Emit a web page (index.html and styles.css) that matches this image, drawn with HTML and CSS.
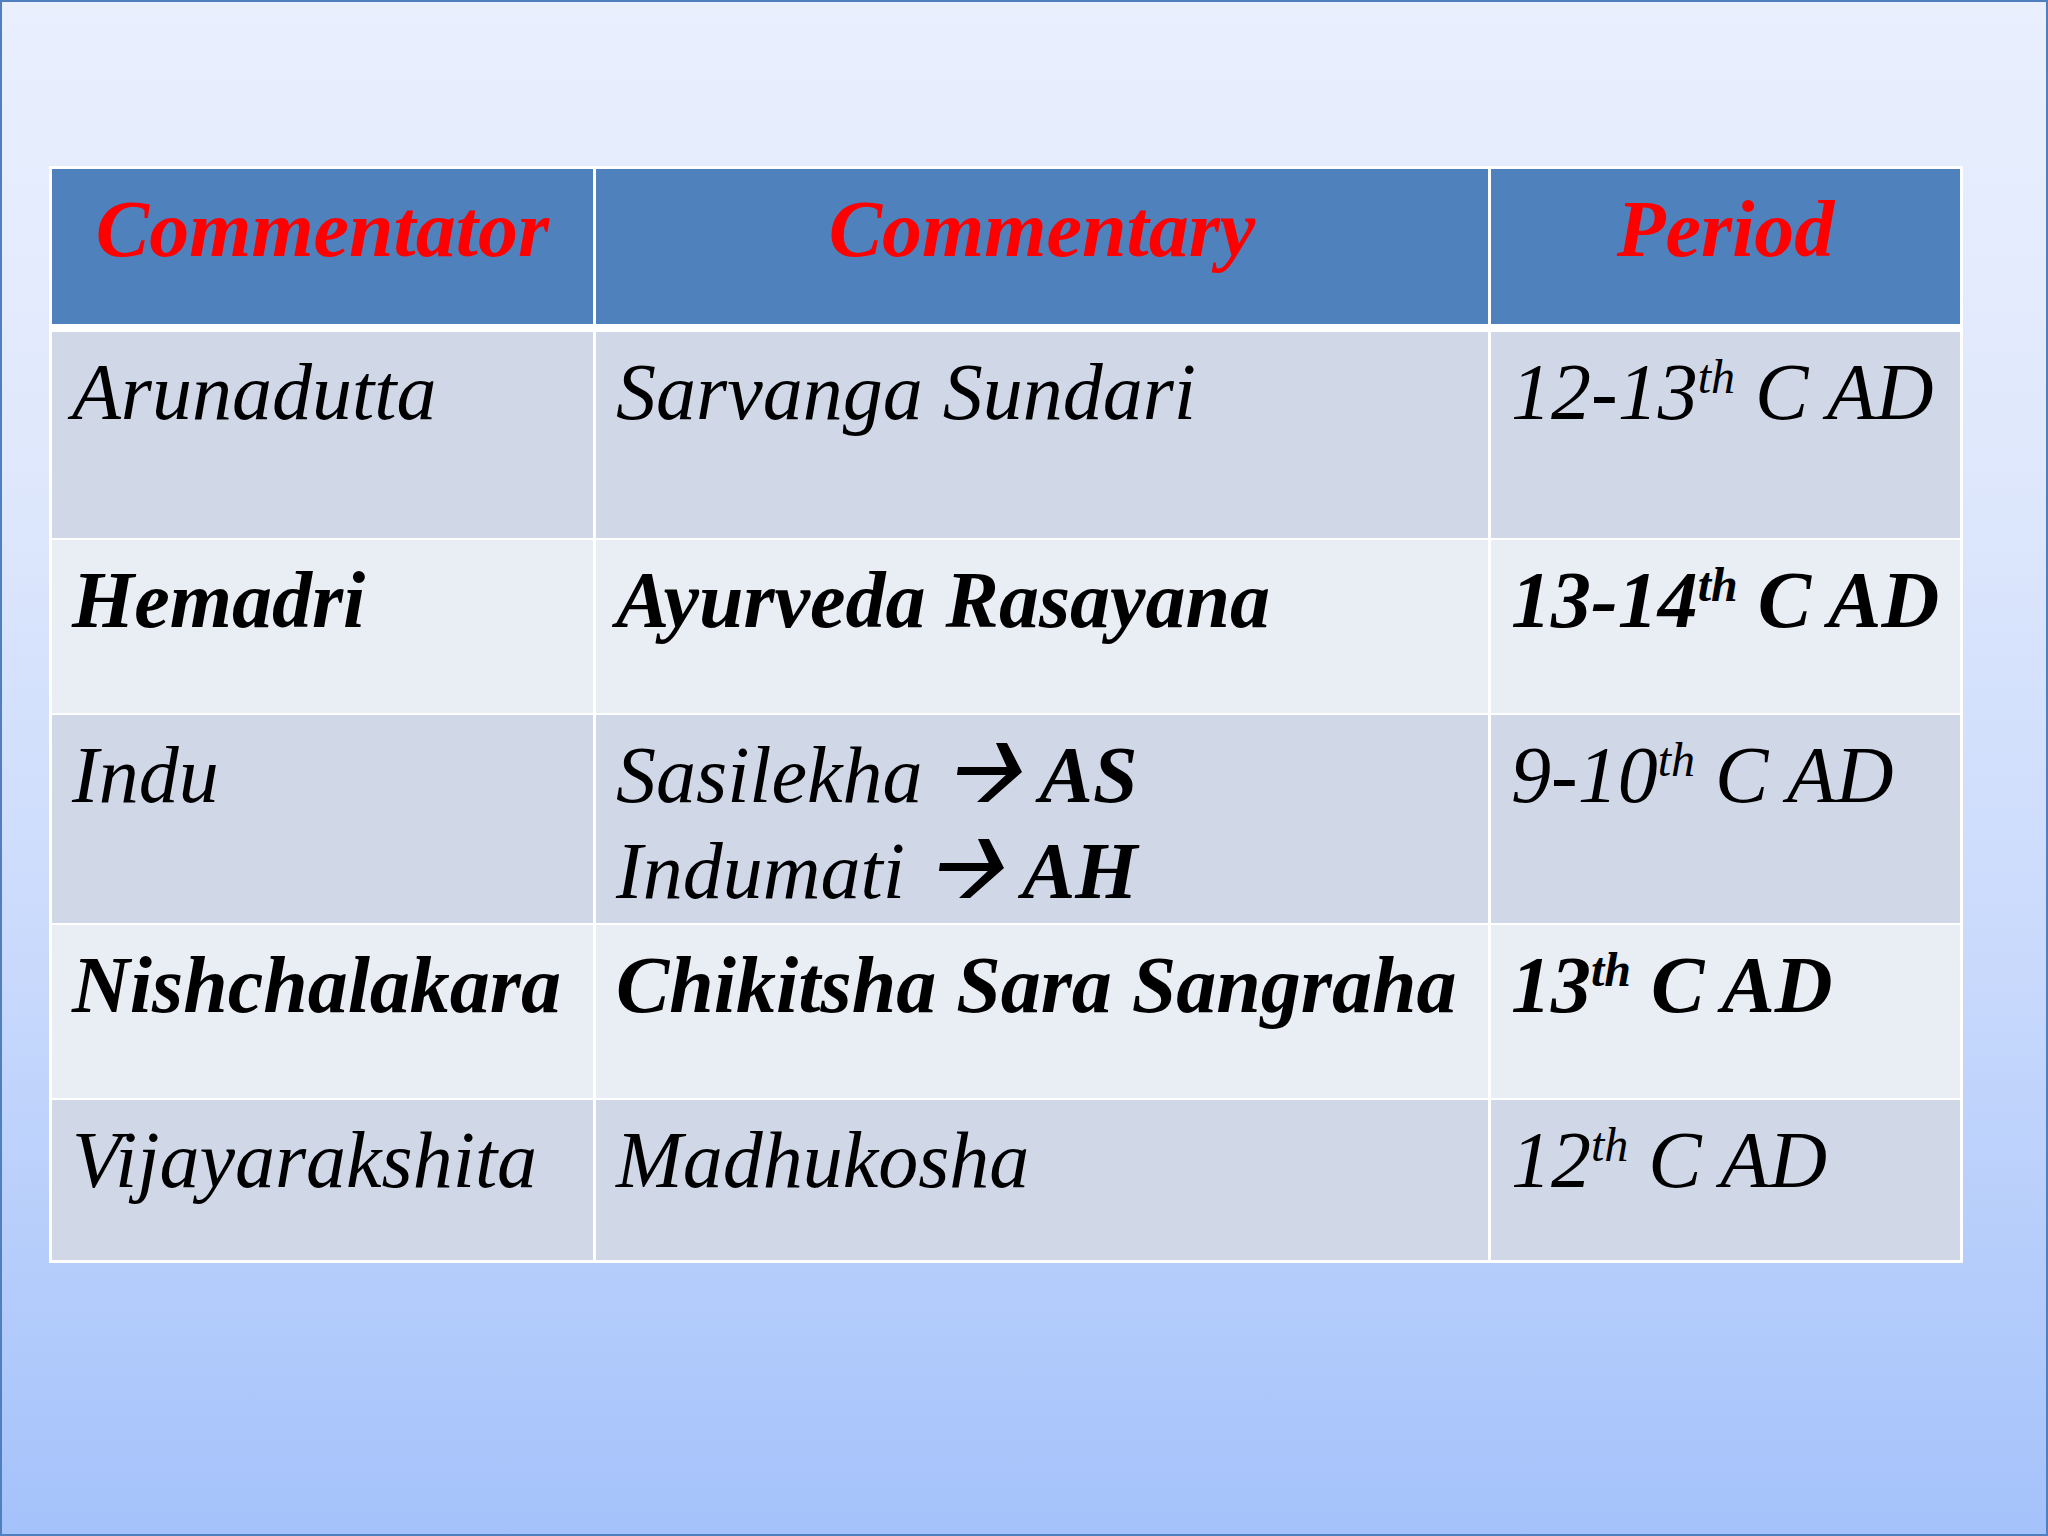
FILE: index.html
```html
<!DOCTYPE html>
<html lang="en">
<head>
<meta charset="utf-8">
<title>Commentators</title>
<link rel="stylesheet" href="styles.css">
</head>
<body>
<div class="slide">
  <div class="table">
    <div class="row head">
      <div class="cell">Commentator</div>
      <div class="cell">Commentary</div>
      <div class="cell">Period</div>
    </div>
    <div class="row odd r1">
      <div class="cell">Arunadutta</div>
      <div class="cell">Sarvanga Sundari</div>
      <div class="cell">12-13<span class="sup">th</span> C AD</div>
    </div>
    <div class="row even bold r2">
      <div class="cell">Hemadri</div>
      <div class="cell">Ayurveda Rasayana</div>
      <div class="cell">13-14<span class="sup">th</span> C AD</div>
    </div>
    <div class="row odd r3">
      <div class="cell">Indu</div>
      <div class="cell">
        <div class="line">Sasilekha <svg class="arrow" viewBox="0 0 65 59" width="65" height="59"><polygon points="1,24 54,24 54,32 0,32"/><polygon points="39,0 50,0 65,29 31,59 20,59 52,29"/></svg><b>AS</b></div>
        <div class="line">Indumati <svg class="arrow" viewBox="0 0 65 59" width="65" height="59"><polygon points="1,24 54,24 54,32 0,32"/><polygon points="39,0 50,0 65,29 31,59 20,59 52,29"/></svg><b>AH</b></div>
      </div>
      <div class="cell">9-10<span class="sup">th</span> C AD</div>
    </div>
    <div class="row even bold r4">
      <div class="cell">Nishchalakara</div>
      <div class="cell">Chikitsha Sara Sangraha</div>
      <div class="cell">13<span class="sup">th</span> C AD</div>
    </div>
    <div class="row odd r5">
      <div class="cell">Vijayarakshita</div>
      <div class="cell">Madhukosha</div>
      <div class="cell">12<span class="sup">th</span> C AD</div>
    </div>
  </div>
</div>
</body>
</html>
```

FILE: styles.css
```css
html, body {
  margin: 0;
  padding: 0;
}
body {
  width: 2048px;
  height: 1536px;
  overflow: hidden;
}
.slide {
  box-sizing: border-box;
  width: 2048px;
  height: 1536px;
  border: 2px solid #4f7fbf;
  background: linear-gradient(180deg, #e9effd 0%, #dfe8fc 30%, #cbdbfc 60%, #a4c2fa 100%);
  padding: 164px 0 0 47px;
  font-family: "Liberation Serif", "Times New Roman", serif;
  font-style: italic;
  color: #000;
}
.table {
  width: 1914px;
  box-sizing: border-box;
  background: #ffffff;
  padding: 3px;
  display: flex;
  flex-direction: column;
  gap: 2px;
}
.row {
  display: grid;
  grid-template-columns: 541px 892px 469px;
  column-gap: 3px;
}
.cell {
  box-sizing: border-box;
  font-size: 80px;
  line-height: 96px;
  padding: 12px 0 0 20px;
  white-space: nowrap;
}
.head {
  height: 155px;
  margin-bottom: 6px;
}
.head .cell {
  background: #4f81bd;
  color: #ff0000;
  font-weight: bold;
  text-align: center;
  padding-left: 0;
}
.odd .cell {
  background: #d0d8e8;
}
.even .cell {
  background: #e9edf4;
}
.bold .cell {
  font-weight: bold;
}
.r1 { height: 206px; }
.r2 { height: 173px; }
.r3 { height: 208px; }
.r4 { height: 173px; }
.r5 { height: 160px; }
.sup {
  font-size: 48px;
  line-height: 48px;
  vertical-align: 0.54em;
}
.arrow {
  vertical-align: baseline;
  margin-left: 14px;
  margin-right: 18px;
  fill: #000;
}
.line b {
  font-weight: bold;
}
```
